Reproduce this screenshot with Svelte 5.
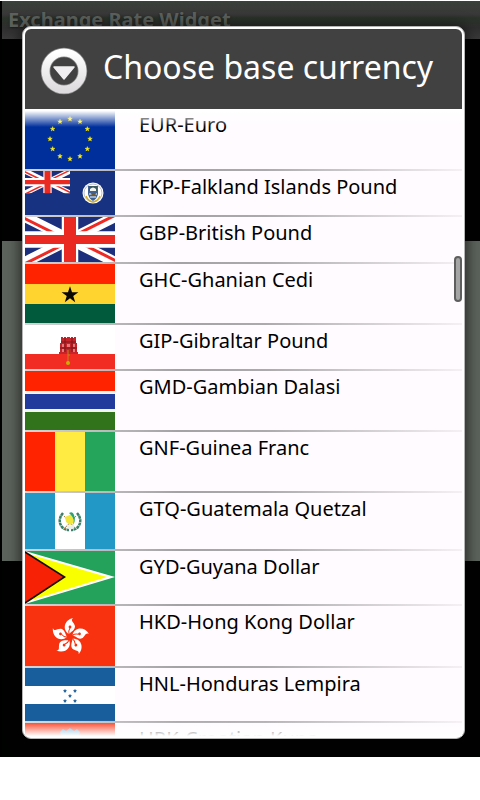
<script>
    const currencies = [
        { code: 'EUR', name: 'Euro', height: 60 },
        { code: 'FKP', name: 'Falkland Islands Pound', height: 44 },
        { code: 'GBP', name: 'British Pound', height: 45 },
        { code: 'GHC', name: 'Ghanian Cedi', height: 59 },
        { code: 'GIP', name: 'Gibraltar Pound', height: 44 },
        { code: 'GMD', name: 'Gambian Dalasi', height: 59 },
        { code: 'GNF', name: 'Guinea Franc', height: 59 },
        { code: 'GTQ', name: 'Guatemala Quetzal', height: 56 },
        { code: 'GYD', name: 'Guyana Dollar', height: 53 },
        { code: 'HKD', name: 'Hong Kong Dollar', height: 60 },
        { code: 'HNL', name: 'Honduras Lempira', height: 53 },
        { code: 'HRK', name: 'Croatian Kuna', height: 45 }
    ];

    let selected = '';

    const star = '0,-10 2.3,-3.1 9.5,-3.1 3.7,1.2 5.9,8.1 0,3.8 -5.9,8.1 -3.7,1.2 -9.5,-3.1 -2.3,-3.1';

    // twelve stars on a circle
    const euStars = Array.from({ length: 12 }, (_, i) => {
        const a = (i * Math.PI) / 6;
        return { x: 45 + 20 * Math.sin(a), y: 30 - 20 * Math.cos(a) };
    });

    const petals = [0, 72, 144, 216, 288];
    const honduranStars = [[40, 23], [50, 23], [45, 28], [40, 33], [50, 33]];
</script>

{#snippet unionJack(id)}
    <clipPath id="{id}-frame"><path d="M0 0H60V30H0z" /></clipPath>
    <clipPath id="{id}-saltire"><path d="M30 15H60V30zV30H0zH0V0zV0H60z" /></clipPath>
    <g clip-path="url(#{id}-frame)">
        <path d="M0 0H60V30H0z" fill="#1c2f7c" />
        <path d="M0 0L60 30M60 0L0 30" stroke="#fff" stroke-width="7" />
        <path d="M0 0L60 30M60 0L0 30" clip-path="url(#{id}-saltire)" stroke="#ee2a24" stroke-width="4" />
        <path d="M30 0V30M0 15H60" stroke="#fff" stroke-width="11" />
        <path d="M30 0V30" stroke="#ea2a22" stroke-width="8" />
        <path d="M0 15H60" stroke="#ea2a22" stroke-width="6" />
    </g>
{/snippet}

{#snippet flag(code)}
    {#if code === 'EUR'}
        <rect width="90" height="60" fill="#002f9c" />
        {#each euStars as s}
            <polygon points={star} transform="translate({s.x} {s.y}) scale(0.24)" fill="#ffee10" stroke="#ffee10" stroke-width="2" />
        {/each}
    {:else if code === 'FKP'}
        <rect width="90" height="44" fill="#183282" />
        <g transform="scale(0.75 0.74)">{@render unionJack('fkp')}</g>
        <circle cx="68" cy="22" r="10.5" fill="#fff" />
        <circle cx="68" cy="22" r="9" fill="none" stroke="#b9bfc4" stroke-width="1" />
        <path d="M63 15H73V23Q72 28 68 30Q64 28 63 23z" fill="#3f6396" />
        <path d="M64 15H72V20H64z" fill="#3a5a60" />
        <path d="M65 18Q68 15 71 18V20H65z" fill="#f4f4ee" />
        <path d="M64 23H72M65 26H71" stroke="#fff" stroke-width="1" />
        <path d="M66 22H71L70 25H67z" fill="#6c5a35" />
        <path d="M61 25Q63 30 68 31Q73 30 75 25" fill="none" stroke="#d2ae28" stroke-width="1.5" />
    {:else if code === 'GBP'}
        <g transform="scale(1.5)">{@render unionJack('gbp')}</g>
    {:else if code === 'GHC'}
        <rect width="90" height="59" fill="#ff2300" />
        <rect y="20" width="90" height="20" fill="#ffd42f" />
        <rect y="40" width="90" height="19" fill="#005a3b" />
        <polygon points={star} transform="translate(45 31) scale(0.88)" fill="#080800" />
    {:else if code === 'GIP'}
        <rect width="90" height="44" fill="#fff" />
        <rect y="29" width="90" height="15" fill="#f02c23" />
        <path d="M34 29V27H35V18H36V12H38V13H39V12H41V13H42V12H45V13H46V12H48V13H49V12H51V18H52V27H53V29z" fill="#c4242a" />
        <path d="M36 17H51M35 23H52M40 13V27M47 13V27" stroke="#7c161b" stroke-width="1" />
        <path d="M37 19H39V22H37zM42 19H45V22H42zM48 19H50V22H48zM37 24H39V27H37zM48 24H50V27H48z" fill="#e8777a" />
        <path d="M43 25V37M43 30H45" stroke="#bb8a18" stroke-width="1" />
        <circle cx="43" cy="38" r="2" fill="#c9b000" />
    {:else if code === 'GMD'}
        <rect width="90" height="59" fill="#f3f6f0" />
        <rect width="90" height="20" fill="#ff2300" />
        <rect y="23" width="90" height="15" fill="#213a9c" />
        <rect y="41" width="90" height="18" fill="#31731a" />
    {:else if code === 'GNF'}
        <rect width="30" height="59" fill="#ff2300" />
        <rect x="30" width="30" height="59" fill="#ffeb42" />
        <rect x="60" width="30" height="59" fill="#24a55b" />
    {:else if code === 'GTQ'}
        <rect width="90" height="56" fill="#2298c6" />
        <rect x="30" width="30" height="56" fill="#fff" />
        <path d="M38 20Q32 27 37 34Q40 37 44 37M52 20Q58 27 53 34Q50 37 46 37" fill="none" stroke="#3d8069" stroke-width="2.5" stroke-dasharray="3 0.5" />
        <path d="M39 36L51 23M51 36L39 23" stroke="#a5824c" stroke-width="1" />
        <path d="M40 24L47 21L50 29L45 32L41 29z" fill="#f1e63c" />
        <path d="M44 20Q48 18 49 22Q51 27 48 32Q50 26 46 22z" fill="#2aa276" />
        <path d="M42 31Q45 34 49 31V35Q45 38 42 34z" fill="#e9eee9" />
    {:else if code === 'GYD'}
        <rect width="90" height="53" fill="#24a15b" />
        <path d="M0 0L90 26L0 53z" fill="#fff" />
        <path d="M0 2L82 26L0 51z" fill="#faff00" />
        <path d="M0 0L41 26L0 53z" fill="#130b08" />
        <path d="M0 2L38 26L0 51z" fill="#f72205" />
    {:else if code === 'HKD'}
        <rect width="90" height="60" fill="#f8310f" />
        {#each petals as angle}
            <g transform="translate(45 31) rotate({angle})">
                <path d="M-1 -3C-8 -7 -6 -17 3 -19C0 -16 4 -15 5 -11C5 -7 2 -6 -1 -3z" fill="#fff" />
                <path d="M-1 -3Q-2 -6 0 -9" fill="none" stroke="#f8310f" stroke-width="1" />
                <circle cx="0" cy="-10" r="1.4" fill="#f8310f" />
            </g>
        {/each}
    {:else if code === 'HNL'}
        <rect width="90" height="53" fill="#185d9c" />
        <rect y="18" width="90" height="18" fill="#fff" />
        {#each honduranStars as [x, y]}
            <polygon points={star} transform="translate({x} {y}) scale(0.14)" fill="#185d9c" stroke="#185d9c" stroke-width="6" />
        {/each}
    {:else if code === 'HRK'}
        <rect width="90" height="15" fill="#f52c0c" />
        <rect y="15" width="90" height="15" fill="#fff" />
        <rect y="30" width="90" height="15" fill="#183a90" />
        <path d="M35 9L38 6L41 8L45 5L49 8L52 6L55 9L53 15H37z" fill="#5aa3d2" />
        <path d="M37 13H53V30Q45 36 37 30z" fill="#fff" />
        <path d="M37 13H41V17H37zM45 13H49V17H45zM41 17H45V21H41zM49 17H53V21H49z" fill="#e02015" />
    {/if}
{/snippet}

<div class="screen">
    <div class="backdrop">
        <div class="title-bar">Exchange Rate Widget</div>
        <div class="panel"></div>
    </div>

    <div class="dialog" role="dialog" aria-labelledby="dialog-title">
        <header>
            <svg class="dialog-icon" viewBox="0 0 48 48" aria-hidden="true">
                <defs>
                    <linearGradient id="ring" x1="0" y1="0" x2="0" y2="1">
                        <stop offset="0" stop-color="#fff" />
                        <stop offset="1" stop-color="#dedcde" />
                    </linearGradient>
                </defs>
                <circle cx="24" cy="24" r="18.5" fill="none" stroke="#8c8c8c" stroke-width="9.5" />
                <circle cx="24" cy="24" r="18.5" fill="none" stroke="url(#ring)" stroke-width="8" />
                <path d="M14 20H34L24 32z" fill="#f0eef0" stroke="#f0eef0" stroke-width="1.5" stroke-linejoin="round" />
            </svg>
            <h1 id="dialog-title">Choose base currency</h1>
        </header>

        <div class="list-wrap">
            <ul>
                {#each currencies as currency (currency.code)}
                    <li>
                        <button
                            class="row"
                            aria-pressed={selected === currency.code}
                            on:click={() => selected = currency.code}
                        >
                            <svg width="90" height={currency.height} viewBox="0 0 90 {currency.height}" aria-hidden="true">
                                {@render flag(currency.code)}
                            </svg>
                            <span>{currency.code}-{currency.name}</span>
                        </button>
                    </li>
                {/each}
            </ul>
            <div class="scroll-thumb"></div>
        </div>
    </div>
</div>

<style>
    :global(body) {
        background: #fff;
    }

    .screen {
        display: grid;
        border-top: 1px solid #fff;
        font-family: "Noto Sans", "Open Sans", sans-serif;
    }

    .backdrop,
    .dialog {
        grid-area: 1 / 1;
        min-width: 0;
    }

    .backdrop {
        background: #000200;
        border-left: 2px solid #000;
    }

    .title-bar {
        height: 38px;
        padding-left: 6px;
        background: linear-gradient(#3a403a, #383838 35%, #293229 45%, #2e2e2e 70%, #3a3a3a);
        color: #5c615c;
        font-size: 20px;
        font-weight: bold;
        line-height: 38px;
        text-shadow: 0 1px 2px #1c1c1c;
    }

    .panel {
        height: 320px;
        margin-top: 202px;
        background: #5c635c;
    }

    .dialog {
        margin: 25px 15px 18px 22px;
        padding: 2px;
        border: 1px solid #b5b5b5;
        border-radius: 9px;
        background: #fff;
        box-shadow: 0 2px 14px 2px rgba(0, 0, 0, 0.6);
        overflow: hidden;
    }

    header {
        display: flex;
        align-items: center;
        gap: 15px;
        height: 80px;
        padding: 0 15px 4px;
        box-sizing: border-box;
        border-radius: 6px 6px 0 0;
        background: #424142;
    }

    .dialog-icon {
        flex: none;
        width: 48px;
        height: 48px;
        margin-top: 8px;
    }

    h1 {
        margin: 0;
        color: #fff;
        font-size: 32px;
        font-weight: normal;
        line-height: 40px;
        white-space: nowrap;
    }

    .list-wrap {
        position: relative;
        background: #fffbff;
    }

    .list-wrap::before,
    .list-wrap::after {
        content: '';
        position: absolute;
        left: 0;
        right: 0;
        top: 0;
        height: 18px;
        background: linear-gradient(#fff 10%, rgba(255, 255, 255, 0));
        pointer-events: none;
    }

    .list-wrap::after {
        top: auto;
        bottom: 0;
        height: 16px;
        background: linear-gradient(rgba(255, 255, 255, 0), #fff);
    }

    ul {
        max-height: 627px;
        margin: 0;
        padding: 0;
        overflow: hidden;
        list-style: none;
    }

    li {
        padding-bottom: 2px;
        background: linear-gradient(90deg, #d6d3d6, #a5a2a5 35%, #adaaad 55%, #f4f0f4) bottom / 100% 2px no-repeat;
    }

    .row {
        display: flex;
        align-items: flex-start;
        gap: 24px;
        width: 100%;
        padding: 0;
        border: none;
        background: none;
        color: #000;
        font-family: inherit;
        font-size: 20px;
        line-height: 32px;
        text-align: left;
        cursor: pointer;
    }

    .row svg {
        flex: none;
        display: block;
    }

    .scroll-thumb {
        position: absolute;
        top: 147px;
        right: 0;
        width: 8px;
        height: 46px;
        box-sizing: border-box;
        border: 2px solid #5e5e5e;
        border-radius: 4px;
        background: #a5a5a5;
    }
</style>
